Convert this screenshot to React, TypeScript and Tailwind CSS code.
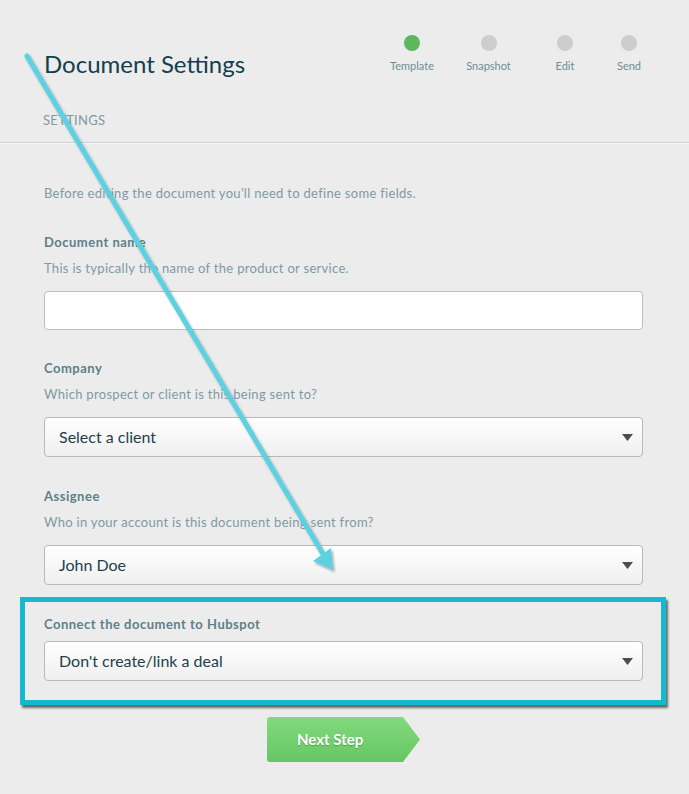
const steps = [
  { label: 'Template', w: 'w-[76px]', active: true },
  { label: 'Snapshot', w: 'w-[77px]', active: false },
  { label: 'Edit', w: 'w-[76px]', active: false },
  { label: 'Send', w: 'w-[52px]', active: false },
];

function Select({ value }: { value: string }) {
  return (
    <div className="flex h-[40px] items-center justify-between rounded-[4px] border border-[#b9b9b9] bg-gradient-to-b from-white to-[#efefef] pl-[14px] pr-[9px]">
      <span className="text-[16px] text-[#1f3f4c]">{value}</span>
      <svg width="11" height="7" viewBox="0 0 11 7">
        <polygon points="0,0 11,0 5.5,7" fill="#4d4d4d" />
      </svg>
    </div>
  );
}

function Field({ label, help, children }: { label: string; help: string; children: React.ReactNode }) {
  return (
    <div>
      <div className="text-[13px] leading-[16px] font-bold tracking-[0.5px] text-[#5d7f8b]">{label}</div>
      <div className="mt-[10px] text-[13px] leading-[16px] tracking-[0.3px] text-[#7e9aa4]">{help}</div>
      <div className="mt-[15px]">{children}</div>
    </div>
  );
}

export default function App() {
  return (
    <div className="relative min-h-[794px] w-[689px] overflow-hidden bg-[#ececec] font-['Lato',sans-serif]">
      {/* Header */}
      <div className="flex items-start justify-between pl-[44px] pr-[34px] pt-[35px]">
        <h1 className="mt-[14px] text-[24px] leading-[30px] text-[#123f4f]">Document Settings</h1>
        <div className="flex">
          {steps.map((s) => (
            <div key={s.label} className={`${s.w} flex flex-col items-center`}>
              <div className={`h-[16px] w-[16px] rounded-full ${s.active ? 'bg-[#5cb85c]' : 'bg-[#cdcdcd]'}`} />
              <div className="mt-[8px] text-[11px] leading-[14px] text-[#6f8d98]">{s.label}</div>
            </div>
          ))}
        </div>
      </div>

      <div className="mt-[33px] pl-[43px] text-[13px] leading-[16px] tracking-[0.3px] text-[#7e9aa4]">SETTINGS</div>
      <div className="mt-[14px] h-px bg-[#d2d2d2]" />
      <div className="h-px bg-[#f6f6f6]" />

      {/* Form */}
      <div className="pl-[44px] pr-[46px] pt-[41px]">
        <p className="text-[13px] leading-[16px] tracking-[0.3px] text-[#7e9aa4]">
          Before editing the document you'll need to define some fields.
        </p>

        <div className="mt-[33px]">
          <Field label="Document name" help="This is typically the name of the product or service.">
            <div className="h-[39px] rounded-[4px] border border-[#bdbdbd] bg-white" />
          </Field>
        </div>

        <div className="mt-[30px]">
          <Field label="Company" help="Which prospect or client is this being sent to?">
            <Select value="Select a client" />
          </Field>
        </div>

        <div className="mt-[31px]">
          <Field label="Assignee" help="Who in your account is this document being sent from?">
            <Select value="John Doe" />
          </Field>
        </div>

        <div className="-ml-[24px] -mr-[23px] mt-[12px] border-[5px] border-[#14b9d1] pb-[19px] pl-[19px] pr-[18px] pt-[14px] shadow-[2px_3px_2px_rgba(0,0,0,0.55)]">
          <div className="text-[13px] leading-[16px] font-bold tracking-[0.5px] text-[#5d7f8b]">Connect the document to Hubspot</div>
          <div className="mt-[9px]">
            <Select value="Don't create/link a deal" />
          </div>
        </div>

        <div className="mt-[12px] flex justify-center">
          <button className="flex h-[45px] w-[153px] items-center rounded-l-[3px] bg-gradient-to-b from-[#82da7e] to-[#66c663] pl-[30px] text-[15px] font-bold text-white [clip-path:polygon(0_0,calc(100%-17px)_0,100%_50%,calc(100%-17px)_100%,0_100%)] [text-shadow:0_1px_1px_rgba(0,0,0,0.25)]">
            Next Step
          </button>
        </div>
      </div>

      {/* Annotation arrow */}
      <svg className="pointer-events-none absolute left-0 top-0" width="689" height="794">
        <defs>
          <filter id="sh" x="-10%" y="-10%" width="130%" height="130%">
            <feDropShadow dx="1.5" dy="2" stdDeviation="1.2" floodColor="#000" floodOpacity="0.35" />
          </filter>
        </defs>
        <g filter="url(#sh)">
          <line x1="27" y1="56" x2="326" y2="559" stroke="#5dd0e1" strokeWidth="5" strokeLinecap="round" />
          <polygon points="333,570 313,561 331,548" fill="#5dd0e1" />
        </g>
      </svg>
    </div>
  );
}
